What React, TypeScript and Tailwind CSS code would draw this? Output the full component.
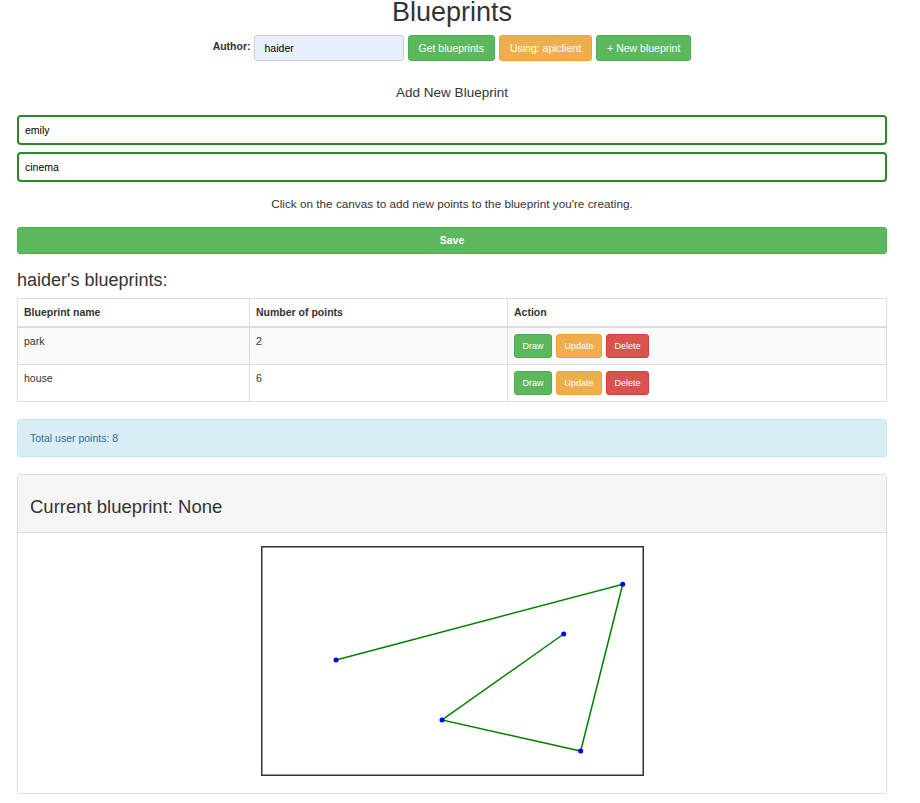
import React from "react";

const pts: [number, number][] = [
  [75, 114],
  [361.7, 38.3],
  [319.7, 205],
  [181, 174],
  [302.7, 88],
];

function SmallBtn({ label, cls }: { label: string; cls: string }) {
  return (
    <button
      className={`h-[24px] px-[7.5px] rounded-[3px] border text-[9px] leading-[13px] text-white ${cls}`}
    >
      {label}
    </button>
  );
}

export default function App() {
  const rows = [
    { name: "park", n: 2, striped: true },
    { name: "house", n: 6, striped: false },
  ];
  return (
    <div
      className="w-[904px] bg-white text-[#333] text-[10.5px] leading-[15px]"
      style={{ fontFamily: '"Liberation Sans", Arial, Helvetica, sans-serif' }}
    >
      <h1 className="text-center text-[27px] leading-[24px] font-normal">Blueprints</h1>

      <div className="mt-[11px] flex justify-center items-start gap-[4px] h-[26px]">
        <label className="font-bold mt-[4px] mr-[-1px]">Author:</label>
        <div className="w-[150px] h-[26px] rounded-[3px] border border-[#ccc] bg-[#e8f0fe] pl-[10px] flex items-center text-black text-[10.5px]">
          haider
        </div>
        <button className="h-[26px] px-[10px] rounded-[3px] border border-[#4cae4c] bg-[#5cb85c] text-white text-[10.5px]">
          Get blueprints
        </button>
        <button className="h-[26px] px-[10px] rounded-[3px] border border-[#eea236] bg-[#f0ad4e] text-white text-[10.5px]">
          Using: apiclient
        </button>
        <button className="h-[26px] px-[10px] rounded-[3px] border border-[#4cae4c] bg-[#5cb85c] text-white text-[10.5px]">
          + New blueprint
        </button>
      </div>

      <h4 className="mt-[24px] text-center text-[13.5px] leading-[15px] font-normal">Add New Blueprint</h4>

      <div className="mx-[17px]">
        <div className="mt-[15px] h-[30px] rounded-[4px] border-2 border-[#2a8a2a] pl-[6px] flex items-center text-black">
          emily
        </div>
        <div className="mt-[7px] h-[30px] rounded-[4px] border-2 border-[#2a8a2a] pl-[6px] flex items-center text-black">
          cinema
        </div>

        <p className="mt-[14px] text-center text-[11.75px] leading-[15px]">
          Click on the canvas to add new points to the blueprint you're creating.
        </p>

        <button className="mt-[16px] w-full h-[27px] rounded-[3px] border border-[#4cae4c] bg-[#5cb85c] text-white font-bold text-[10.5px]">
          Save
        </button>

        <h3 className="mt-[16px] text-[18px] leading-[20px] font-normal">haider's blueprints:</h3>

        <table className="mt-[8px] w-full border-collapse">
          <thead>
            <tr>
              <th className="w-[232px] border border-[#ddd] border-b-2 px-[6px] py-[6px] text-left font-bold">Blueprint name</th>
              <th className="w-[258px] border border-[#ddd] border-b-2 px-[6px] py-[6px] text-left font-bold">Number of points</th>
              <th className="border border-[#ddd] border-b-2 px-[6px] py-[6px] text-left font-bold">Action</th>
            </tr>
          </thead>
          <tbody>
            {rows.map((r) => (
              <tr key={r.name} className={r.striped ? "bg-[#f9f9f9]" : "bg-white"}>
                <td className="border border-[#ddd] px-[6px] py-[6px] align-top">{r.name}</td>
                <td className="border border-[#ddd] px-[6px] py-[6px] align-top">{r.n}</td>
                <td className="border border-[#ddd] px-[6px] py-[6px] align-top">
                  <div className="flex gap-[4px]">
                    <SmallBtn label="Draw" cls="bg-[#5cb85c] border-[#4cae4c]" />
                    <SmallBtn label="Update" cls="bg-[#f0ad4e] border-[#eea236]" />
                    <SmallBtn label="Delete" cls="bg-[#d9534f] border-[#d43f3a]" />
                  </div>
                </td>
              </tr>
            ))}
          </tbody>
        </table>

        <div className="mt-[17px] h-[38px] rounded-[3px] border border-[#bce8f1] bg-[#d9edf7] text-[#31708f] px-[12px] flex items-center">
          Total user points: 8
        </div>

        <div className="mt-[17px] rounded-[3px] border border-[#ddd] shadow-[0_1px_1px_rgba(0,0,0,0.05)]">
          <div className="h-[58px] bg-[#f5f5f5] border-b border-[#ddd] px-[12px] flex items-center">
            <h3 className="text-[18.5px] leading-[20px] font-normal text-[#333] mt-[6px]">Current blueprint: None</h3>
          </div>
          <div className="pt-[13px] pb-[17px] flex justify-center">
            <svg width="383" height="230" viewBox="0 0 383 230" className="block">
              <rect x="0.75" y="0.75" width="381.5" height="228.5" fill="white" stroke="#333" strokeWidth="1.5" />
              <polyline
                points={pts.map((p) => p.join(",")).join(" ")}
                fill="none"
                stroke="#008000"
                strokeWidth="1.5"
              />
              {pts.map((p, i) => (
                <circle key={i} cx={p[0]} cy={p[1]} r="2.5" fill="#0000ff" />
              ))}
            </svg>
          </div>
        </div>
      </div>
    </div>
  );
}
